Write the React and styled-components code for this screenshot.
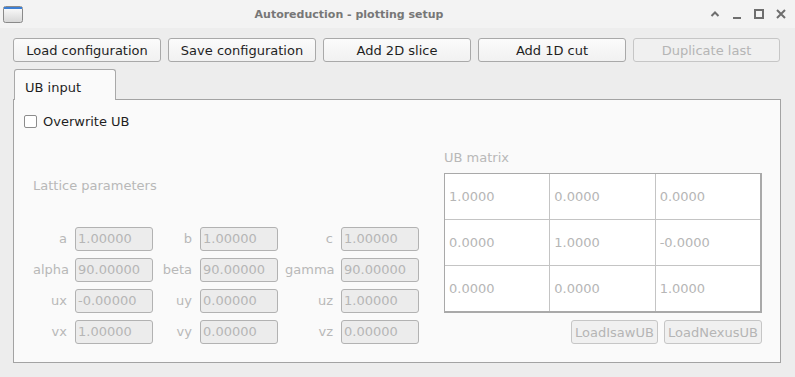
import React from 'react'
import styled, { createGlobalStyle } from 'styled-components'

const GlobalStyle = createGlobalStyle`
  html, body {
    margin: 0;
    padding: 0;
    background: #ededed;
  }
  body {
    font-family: "DejaVu Sans", "Liberation Sans", sans-serif;
    font-size: 13px;
  }
`

const Window = styled.div`
  display: flex;
  flex-direction: column;
  width: 795px;
  height: 377px;
  background: #ededed;
  overflow: hidden;
`

const TitleBar = styled.div`
  display: flex;
  align-items: center;
  height: 28px;
  background: #f3f3f3;
  flex-shrink: 0;
`

const AppIcon = styled.div`
  width: 26px;
  display: flex;
  justify-content: center;
`

const Title = styled.div`
  flex: 1;
  text-align: center;
  font-weight: bold;
  color: #777777;
  font-size: 11px;
`

const Controls = styled.div`
  width: 123px;
  display: flex;
  justify-content: flex-end;
  align-items: center;
  gap: 12px;
  padding-right: 9px;
  box-sizing: border-box;
`

const Body = styled.div`
  flex: 1;
  display: flex;
  flex-direction: column;
  padding: 10px 14px 14px 13px;
`

const ButtonRow = styled.div`
  display: flex;
  gap: 7px;
`

const Button = styled.button`
  width: ${p => p.w || 148}px;
  height: 24px;
  padding: 0;
  font-family: inherit;
  font-size: 13px;
  color: ${p => (p.disabled ? '#b5b5b5' : '#1f1f1f')};
  background: ${p => (p.disabled ? '#f0f0f0' : 'linear-gradient(#fbfbfb, #f1f1f1)')};
  border: 1px solid ${p => (p.disabled ? '#c6c6c6' : '#a9a9a9')};
  border-radius: 3px;
`

const TabBar = styled.div`
  display: flex;
  margin-top: 7px;
  padding-left: 1px;
`

const Tab = styled.div`
  width: 102px;
  height: 31px;
  box-sizing: border-box;
  padding: 10px 0 0 10px;
  background: #fafafa;
  border: 1px solid #a9a9a9;
  border-bottom: none;
  border-radius: 3px 3px 0 0;
  color: #1f1f1f;
  margin-bottom: -1px;
  position: relative;
  z-index: 1;
`

const Panel = styled.div`
  height: 264px;
  box-sizing: border-box;
  background: #fafafa;
  border: 1px solid #a3a3a3;
  padding: 13px 10px 0 10px;
  display: flex;
  flex-direction: column;
`

const CheckRow = styled.label`
  display: flex;
  align-items: center;
  gap: 6px;
  height: 17px;
  color: #1f1f1f;
`

const CheckBox = styled.span`
  width: 13px;
  height: 13px;
  box-sizing: border-box;
  background: #ffffff;
  border: 1px solid #8c8c8c;
  border-radius: 2px;
`

const Content = styled.div`
  display: flex;
`

const LatticeColumn = styled.div`
  width: 420px;
  padding: 48px 0 0 9px;
  box-sizing: border-box;
  flex-shrink: 0;
`

const GroupTitle = styled.div`
  color: #b8b8b8;
  height: 16px;
  line-height: 16px;
  margin-bottom: ${p => p.gap}px;
`

const LatticeGrid = styled.div`
  display: grid;
  grid-template-columns: 35px 78px 33px 78px 49px 78px;
  column-gap: 7px;
  row-gap: 7px;
`

const FieldLabel = styled.div`
  text-align: right;
  line-height: 24px;
  color: #b8b8b8;
  padding-right: 1px;
`

const Field = styled.div`
  height: 24px;
  box-sizing: border-box;
  background: #ececec;
  border: 1px solid #b2b2b2;
  border-radius: 3px;
  padding-left: 2px;
  line-height: 22px;
  color: #b6b6b6;
`

const MatrixColumn = styled.div`
  width: 318px;
  padding-top: 20px;
  flex-shrink: 0;
`

const Matrix = styled.div`
  display: grid;
  grid-template-columns: 1fr 1fr 1fr;
  grid-auto-rows: 45px;
  gap: 1px;
  background: #c4c4c4;
  border: 1px solid #a9a9a9;
  border-right-width: 2px;
  border-bottom-width: 2px;
  width: 318px;
  box-sizing: border-box;
`

const Cell = styled.div`
  background: #ffffff;
  color: #b6b6b6;
  padding-left: 4px;
  display: flex;
  align-items: center;
`

const MatrixButtons = styled.div`
  display: flex;
  justify-content: flex-end;
  gap: 6px;
  margin-top: 7px;
`

const lattice = [
  ['a', '1.00000', 'b', '1.00000', 'c', '1.00000'],
  ['alpha', '90.00000', 'beta', '90.00000', 'gamma', '90.00000'],
  ['ux', '-0.00000', 'uy', '0.00000', 'uz', '1.00000'],
  ['vx', '1.00000', 'vy', '0.00000', 'vz', '0.00000'],
]

const ub = [
  ['1.0000', '0.0000', '0.0000'],
  ['0.0000', '1.0000', '-0.0000'],
  ['0.0000', '0.0000', '1.0000'],
]

const WindowIcon = () => (
  <svg width="20" height="17" viewBox="0 0 20 17">
    <defs>
      <linearGradient id="wi" x1="0" y1="0" x2="0" y2="1">
        <stop offset="0" stopColor="#fdfdfd" />
        <stop offset="1" stopColor="#d6d6d6" />
      </linearGradient>
    </defs>
    <rect x="0.5" y="0.5" width="19" height="16" rx="2" fill="url(#wi)" stroke="#8a8a8a" />
    <rect x="1" y="1" width="18" height="2" fill="#3d7fd4" />
  </svg>
)

const Caret = () => (
  <svg width="10" height="10" viewBox="0 0 10 10">
    <path d="M1.5 7 L5 3.5 L8.5 7" fill="none" stroke="#6e6e6e" strokeWidth="2" />
  </svg>
)

const Minimize = () => (
  <svg width="10" height="10" viewBox="0 0 10 10">
    <rect x="1" y="8" width="8" height="2" fill="#6e6e6e" />
  </svg>
)

const Maximize = () => (
  <svg width="10" height="10" viewBox="0 0 10 10">
    <rect x="1" y="1" width="8" height="8" fill="none" stroke="#6e6e6e" strokeWidth="2" />
  </svg>
)

const Close = () => (
  <svg width="10" height="10" viewBox="0 0 10 10">
    <path d="M1 1 L9 9 M9 1 L1 9" stroke="#6e6e6e" strokeWidth="2" />
  </svg>
)

export default function App() {
  return (
    <Window>
      <GlobalStyle />
      <TitleBar>
        <AppIcon>
          <WindowIcon />
        </AppIcon>
        <Title>Autoreduction - plotting setup</Title>
        <Controls>
          <Caret />
          <Minimize />
          <Maximize />
          <Close />
        </Controls>
      </TitleBar>
      <Body>
        <ButtonRow>
          <Button>Load configuration</Button>
          <Button>Save configuration</Button>
          <Button>Add 2D slice</Button>
          <Button>Add 1D cut</Button>
          <Button w={147} disabled>Duplicate last</Button>
        </ButtonRow>
        <TabBar>
          <Tab>UB input</Tab>
        </TabBar>
        <Panel>
          <CheckRow>
            <CheckBox />
            Overwrite UB
          </CheckRow>
          <Content>
            <LatticeColumn>
              <GroupTitle gap={33}>Lattice parameters</GroupTitle>
              <LatticeGrid>
                {lattice.map(row =>
                  [0, 2, 4].map(i => (
                    <React.Fragment key={row[i]}>
                      <FieldLabel>{row[i]}</FieldLabel>
                      <Field>{row[i + 1]}</Field>
                    </React.Fragment>
                  ))
                )}
              </LatticeGrid>
            </LatticeColumn>
            <MatrixColumn>
              <GroupTitle gap={7}>UB matrix</GroupTitle>
              <Matrix>
                {ub.flat().map((v, i) => (
                  <Cell key={i}>{v}</Cell>
                ))}
              </Matrix>
              <MatrixButtons>
                <Button w={87} disabled>LoadIsawUB</Button>
                <Button w={98} disabled>LoadNexusUB</Button>
              </MatrixButtons>
            </MatrixColumn>
          </Content>
        </Panel>
      </Body>
    </Window>
  )
}
